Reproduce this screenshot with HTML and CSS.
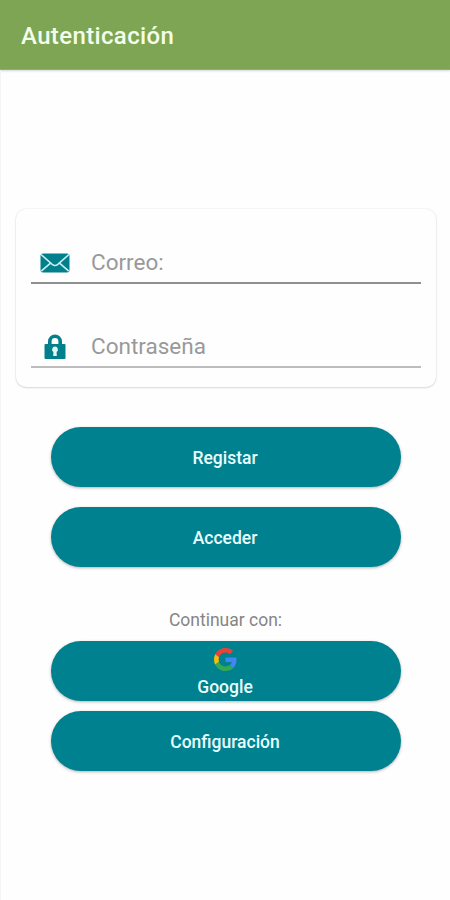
FILE: index.html
```html
<!DOCTYPE html>
<html lang="es">
<head>
<meta charset="utf-8">
<title>Autenticación</title>
<link rel="stylesheet" href="styles.css">
</head>
<body>
<header class="bar"><h1 class="title">Autenticación</h1></header>
<main class="content">
  <section class="card">
    <div class="field">
      <svg class="icon" viewBox="0 0 30 20">
        <rect x="0.5" y="0.5" width="29" height="19" rx="2.5" fill="#00808c"/>
        <path d="M1 1.5 L12.2 11.4 Q15 13.6 17.8 11.4 L29 1.5 M1.2 18.2 L10.8 9.8 M28.8 18.2 L19.2 9.8" fill="none" stroke="#c9eef0" stroke-width="1.6"/>
      </svg>
      <span class="hint">Correo:</span>
    </div>
    <div class="field field-light">
      <svg class="icon icon-lock" viewBox="0 0 30 26">
        <path d="M9.8 11 V7.5 a5.2 5.2 0 0 1 10.4 0 V11" fill="none" stroke="#00808c" stroke-width="3.6"/>
        <rect x="4.5" y="10" width="21" height="15" rx="1" fill="#00808c"/>
        <path d="M15 12.5 a3 3 0 0 1 1.6 5.5 L16.8 22 H13.2 L13.4 18 A3 3 0 0 1 15 12.5z" fill="#e2f8f8"/>
      </svg>
      <span class="hint">Contraseña</span>
    </div>
  </section>
  <div class="actions">
    <button class="button">Registar</button>
    <button class="button">Acceder</button>
  </div>
  <p class="caption">Continuar con:</p>
  <div class="actions actions-tight">
    <button class="button button-google">
      <svg class="google" viewBox="0 0 48 48">
        <path fill="#ea4335" d="M24 9.5c3.54 0 6.71 1.22 9.21 3.6l6.85-6.85C35.9 2.38 30.47 0 24 0 14.62 0 6.51 5.38 2.56 13.22l7.98 6.19C12.43 13.72 17.74 9.5 24 9.5z"/>
        <path fill="#4285f4" d="M46.98 24.55c0-1.57-.15-3.09-.38-4.55H24v9.02h12.94c-.58 2.96-2.26 5.48-4.78 7.18l7.73 6c4.51-4.18 7.09-10.36 7.09-17.65z"/>
        <path fill="#fbbc05" d="M10.53 28.59c-.48-1.45-.76-2.99-.76-4.59s.27-3.14.76-4.59l-7.98-6.19C.92 16.46 0 20.12 0 24s.92 7.54 2.56 10.78l7.97-6.19z"/>
        <path fill="#34a853" d="M24 48c6.48 0 11.93-2.13 15.89-5.81l-7.73-6c-2.15 1.45-4.92 2.3-8.16 2.3-6.26 0-11.57-4.22-13.47-9.91l-7.98 6.19C6.51 42.62 14.62 48 24 48z"/>
      </svg>
      <span>Google</span>
    </button>
    <button class="button">Configuración</button>
  </div>
</main>
</body>
</html>
```
FILE: styles.css
```css
* { box-sizing: border-box; }

body {
  margin: 0;
  height: 900px;
  background: #fefefe;
  font-family: Roboto, "Liberation Sans", sans-serif;
}

.bar {
  display: flex;
  align-items: center;
  height: 70px;
  padding: 2px 21px 0;
  background: #7ea554;
  border-bottom: 1px solid #90ae70;
  box-shadow: 0 1px 2px rgba(0, 0, 0, 0.16);
}

.title {
  margin: 0;
  color: #f3fdeb;
  font-size: 24px;
  font-weight: 500;
  line-height: 28px;
  letter-spacing: 0.36px;
}

.content {
  height: 830px;
  padding: 139px 14.5px 0;
  border-left: 1px solid #f4f4f4;
}

.card {
  height: 178px;
  padding: 33px 15px 0;
  border-radius: 10px;
  background: #fefefe;
  box-shadow: 0 0 2px rgba(0, 0, 0, 0.13), 0 1px 2px rgba(0, 0, 0, 0.12);
}

.field {
  display: flex;
  align-items: center;
  gap: 21px;
  height: 42px;
  padding: 1px 9.5px 0;
  border-bottom: 2px solid #8f8f8f;
}

.field-light {
  margin-top: 42px;
  border-color: #bdbdbd;
}

.icon { width: 30px; height: 20px; }
.icon-lock { height: 26px; }

.hint {
  color: #999;
  font-size: 22.5px;
  line-height: 28px;
  padding-bottom: 1px;
}

.actions {
  display: flex;
  flex-direction: column;
  gap: 20px;
  margin: 40px 35px 0;
}

.actions-tight {
  gap: 10px;
  margin-top: 9px;
}

.button {
  height: 60px;
  padding: 2px 1px 0 0;
  border: 0;
  border-radius: 30px;
  background: #00818f;
  color: #e8ffff;
  font: 500 17.5px/21px Roboto, "Liberation Sans", sans-serif;
  box-shadow: 0 1px 3px rgba(0, 0, 0, 0.3);
}

.button-google {
  display: flex;
  flex-direction: column;
  align-items: center;
  padding-top: 7px;
  gap: 6px;
}

.google { width: 23px; height: 23px; }

.caption {
  margin: 42px 0 0;
  color: #858585;
  font-size: 17.5px;
  line-height: 23px;
  text-align: center;
}
```
